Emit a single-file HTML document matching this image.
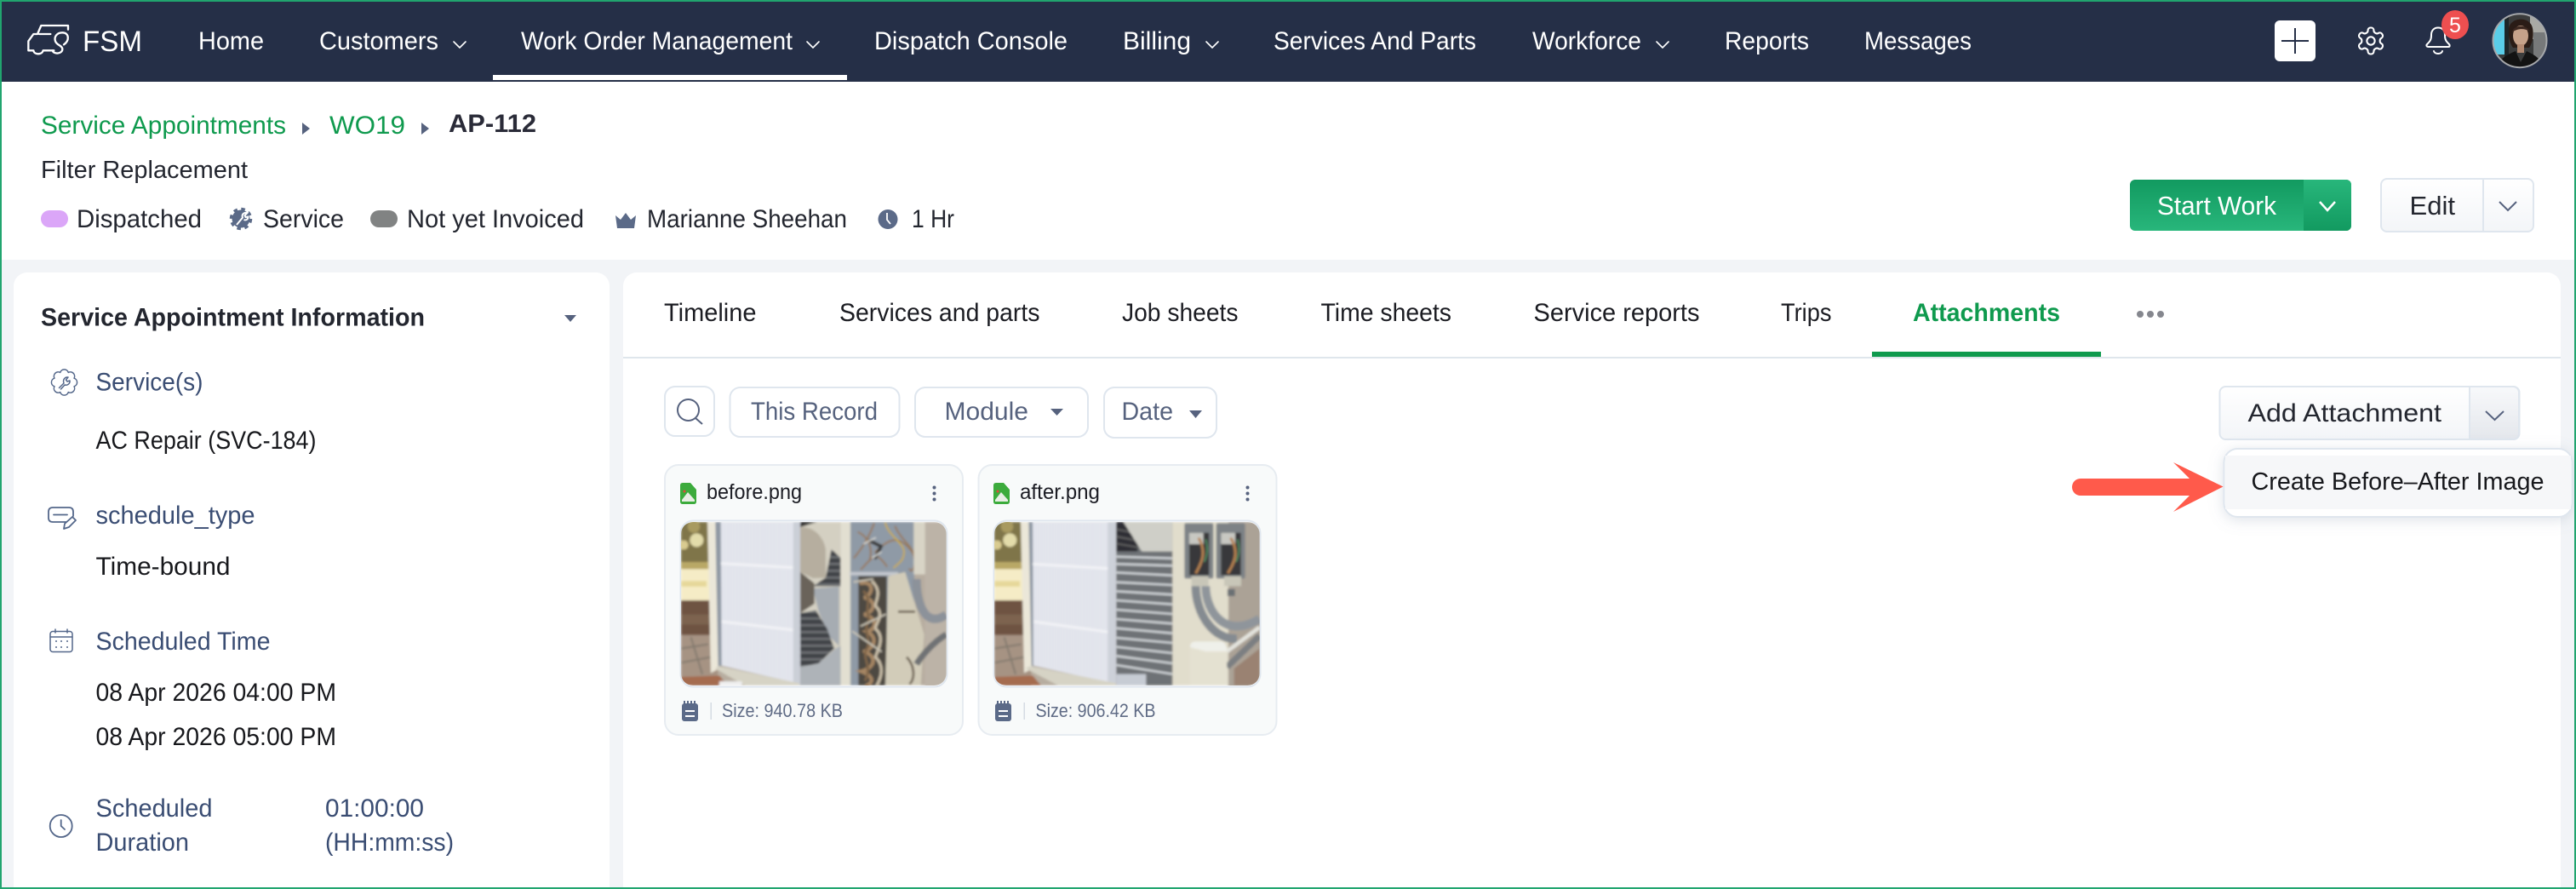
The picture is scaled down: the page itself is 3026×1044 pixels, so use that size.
<!DOCTYPE html>
<html><head><meta charset="utf-8"><title>FSM</title>
<style>
html,body{margin:0;padding:0;background:#fff;width:3026px;height:1044px;overflow:hidden}
svg{display:block}
text{font-family:"Liberation Sans",sans-serif;font-size:30px;fill:#23262f}
.n{fill:#fff}.g{fill:#0f9a4e}.l{fill:#3a4d73}.v{fill:#17181c}.b{font-weight:700}
.t{fill:#1b1c22}.f{fill:#56627e}.s{font-size:22px;fill:#5f6b85}.p{font-size:25px;fill:#1c1d24}
.ic{fill:none;stroke:#54678a;stroke-width:1.8;stroke-linecap:round;stroke-linejoin:round}
.w{fill:none;stroke:#fff;stroke-width:2;stroke-linecap:round;stroke-linejoin:round}
</style></head><body>
<svg width="3026" height="1044" viewBox="0 0 3026 1044" xmlns="http://www.w3.org/2000/svg">
<defs>
<linearGradient id="gm" x1="0" y1="0" x2="0" y2="1"><stop offset="0" stop-color="#129a60"/><stop offset="1" stop-color="#28b67b"/></linearGradient>
<linearGradient id="gs" x1="0" y1="0" x2="0" y2="1"><stop offset="0" stop-color="#28b67b"/><stop offset="1" stop-color="#129a60"/></linearGradient>
<linearGradient id="gw" x1="0" y1="0" x2="0" y2="1"><stop offset="0" stop-color="#fff"/><stop offset="1" stop-color="#f3f5f8"/></linearGradient>
<linearGradient id="gd" x1="0" y1="0" x2="0" y2="1"><stop offset="0" stop-color="#f8f9fb"/><stop offset="1" stop-color="#e4e7ec"/></linearGradient>
<filter id="bl" x="0" y="0" width="1" height="1"><feGaussianBlur stdDeviation="3.6"/></filter>
<filter id="sh" x="-10%" y="-30%" width="120%" height="160%"><feDropShadow dx="0" dy="3" stdDeviation="8" flood-color="#8090a8" flood-opacity=".25"/></filter>
<clipPath id="c1"><rect x="15" y="24" width="935" height="576" rx="42"/></clipPath>
<clipPath id="av"><circle cx="2960" cy="47.7" r="31"/></clipPath>
<pattern id="fl" width="10" height="20" patternUnits="userSpaceOnUse"><rect width="10" height="20" fill="#e6e8ef"/><rect width="3" height="20" fill="#d9dce5"/></pattern>
<pattern id="lv" width="20" height="24" patternUnits="userSpaceOnUse"><rect width="20" height="24" fill="#404246"/><rect y="0" width="20" height="8" fill="#6e7174"/></pattern>
<g id="bgp">
<rect x="15" y="24" width="110" height="165" fill="#7f7448"/>
<circle cx="70" cy="88" r="24" fill="#e3dcaa"/><circle cx="25" cy="105" r="16" fill="#d9cb90"/><circle cx="60" cy="40" r="22" fill="#a89a60"/>
<rect x="15" y="165" width="110" height="30" fill="#b9a866"/>
<rect x="15" y="190" width="110" height="112" fill="#f5ecc6"/><rect x="15" y="232" width="90" height="20" fill="#e6d89a"/>
<rect x="15" y="300" width="110" height="125" fill="#6e5243"/><rect x="15" y="350" width="100" height="35" fill="#7d6450"/>
<rect x="15" y="422" width="130" height="180" fill="#a69383"/>
<path d="M15 470L110 455M15 520L120 500M50 430L90 560" stroke="#837a6e" stroke-width="6" fill="none"/>
<path d="M15 570L150 565L180 600H15Z" fill="#a56c50"/>
<path d="M108 24H142L150 540L120 556Z" fill="#ebe7d9"/>
<path d="M136 24H158L162 530L146 532Z" fill="#8e97a3"/>
</g>
</defs>

<rect width="3026" height="1044" fill="#21a56f"/>
<rect x="2" y="2" width="3022" height="1040" fill="#fff"/>
<rect x="2" y="305" width="3022" height="737" fill="#f2f4f7"/>
<rect x="2" y="2" width="3022" height="94" fill="#252f47"/>

<!-- logo -->
<g transform="translate(20,20) scale(.3333)" fill="none" stroke="#fff" stroke-width="7" stroke-linecap="round" stroke-linejoin="round">
<path d="M180 44V30H85L72 60H58L40 85V118H58M92 118H130M58 118C60 134 88 134 92 118"/>
<path d="M78 60H118"/>
<path d="M165 97C186 84 184 55 160 55C140 55 130 70 135 85C140 100 160 100 160 113C160 130 130 133 125 118"/>
</g>
<text class="n" x="97" y="60" style="font-size:34px" textLength="70" lengthAdjust="spacingAndGlyphs">FSM</text>

<!-- nav -->
<text class="n" x="233" y="58" textLength="77" lengthAdjust="spacingAndGlyphs">Home</text>
<text class="n" x="375" y="58" textLength="140" lengthAdjust="spacingAndGlyphs">Customers</text>
<path class="w" d="M533 49L540 56L547 49" style="stroke-width:1.600"/>
<text class="n" x="612" y="58" textLength="319" lengthAdjust="spacingAndGlyphs">Work Order Management</text>
<path class="w" d="M948 49L955 56L962 49" style="stroke-width:1.600"/>
<rect x="579" y="88" width="416" height="6" fill="#fff"/>
<text class="n" x="1027" y="58" textLength="227" lengthAdjust="spacingAndGlyphs">Dispatch Console</text>
<text class="n" x="1319" y="58" textLength="80" lengthAdjust="spacingAndGlyphs">Billing</text>
<path class="w" d="M1417 49L1424 56L1431 49" style="stroke-width:1.600"/>
<text class="n" x="1496" y="58" textLength="238" lengthAdjust="spacingAndGlyphs">Services And Parts</text>
<text class="n" x="1800" y="58" textLength="128" lengthAdjust="spacingAndGlyphs">Workforce</text>
<path class="w" d="M1946 49L1953 56L1960 49" style="stroke-width:1.600"/>
<text class="n" x="2026" y="58" textLength="99" lengthAdjust="spacingAndGlyphs">Reports</text>
<text class="n" x="2190" y="58" textLength="126" lengthAdjust="spacingAndGlyphs">Messages</text>

<rect x="2672" y="24" width="48" height="48" rx="6" fill="#fff"/>
<path d="M2680 48H2712M2696 33V63" stroke="#252f47" stroke-width="2"/>
<g transform="translate(2766.4,29.4) scale(1.55)" fill="none" stroke="#fff" stroke-width="1.35" stroke-linecap="round" stroke-linejoin="round">
<path d="M12.22 2h-.44a2 2 0 0 0-2 2v.18a2 2 0 0 1-1 1.73l-.43.25a2 2 0 0 1-2 0l-.15-.08a2 2 0 0 0-2.73.73l-.22.38a2 2 0 0 0 .73 2.73l.15.1a2 2 0 0 1 1 1.72v.51a2 2 0 0 1-1 1.74l-.15.09a2 2 0 0 0-.73 2.73l.22.38a2 2 0 0 0 2.73.73l.15-.08a2 2 0 0 1 2 0l.43.25a2 2 0 0 1 1 1.73V20a2 2 0 0 0 2 2h.44a2 2 0 0 0 2-2v-.18a2 2 0 0 1 1-1.73l.43-.25a2 2 0 0 1 2 0l.15.08a2 2 0 0 0 2.73-.73l.22-.39a2 2 0 0 0-.73-2.73l-.15-.08a2 2 0 0 1-1-1.74v-.5a2 2 0 0 1 1-1.74l.15-.09a2 2 0 0 0 .73-2.73l-.22-.38a2 2 0 0 0-2.73-.73l-.15.08a2 2 0 0 1-2 0l-.43-.25a2 2 0 0 1-1-1.73V4a2 2 0 0 0-2-2z"/><circle cx="12" cy="12" r="3"/></g>
<path class="w" d="M2853 55H2876C2878 55 2878 53 2877 52C2874 49 2872 47 2872 42V41C2872 36 2869 32.500 2864 32.500C2859 32.500 2856 36 2856 41V42C2856 47 2854 49 2851 52C2850 53 2850 55 2853 55ZM2859 60C2860 64 2868 64 2869 60"/>
<ellipse cx="2884" cy="29" rx="16" ry="17" fill="#ee4f50"/>
<text x="2884" y="38" text-anchor="middle" style="font-size:25px;fill:#fff">5</text>

<!-- avatar -->
<g clip-path="url(#av)">
<rect x="2928" y="16" width="64" height="64" fill="#3b3c3c"/>
<rect x="2928" y="16" width="15" height="48" fill="#5acde8"/>
<rect x="2942" y="16" width="5" height="64" fill="#1c2629"/>
<rect x="2972" y="16" width="20" height="30" fill="#a9a9a4"/>
<rect x="2976" y="38" width="16" height="42" fill="#77797a"/>
<path d="M2947 34C2948 20 2972 18 2975 33C2977 44 2974 52 2971 56H2952C2949 52 2946 44 2947 34Z" fill="#2a1c16"/>
<ellipse cx="2961" cy="42" rx="9" ry="12" fill="#c6a28a"/>
<path d="M2951 38C2952 29 2968 28 2972 37C2966 33 2957 33 2951 38Z" fill="#3c2820"/>
<path d="M2957 52H2965V62H2957Z" fill="#b38a72"/>
<path d="M2932 80C2936 68 2948 63 2955 60L2961 73L2968 60C2976 64 2985 68 2988 80Z" fill="#131313"/>
</g>
<circle cx="2960" cy="47.700" r="31.500" fill="none" stroke="#a6a8ab" stroke-width="2"/>

<!-- header -->
<text class="g" x="48" y="157" textLength="288" lengthAdjust="spacingAndGlyphs">Service Appointments</text>
<path d="M355 144L364 151L355 158Z" fill="#56627e"/>
<text class="g" x="387" y="157" textLength="89" lengthAdjust="spacingAndGlyphs">WO19</text>
<path d="M495 144L504 151L495 158Z" fill="#56627e"/>
<text class="b" x="527" y="155" textLength="103" lengthAdjust="spacingAndGlyphs" style="fill:#2a2b38">AP-112</text>
<text x="48" y="209" textLength="243" lengthAdjust="spacingAndGlyphs" style="font-size:29px">Filter Replacement</text>

<rect x="48" y="247" width="32" height="20" rx="10" fill="#dba6f8"/>
<text x="90" y="267" textLength="147" lengthAdjust="spacingAndGlyphs">Dispatched</text>
<g fill="#5b6a88"><circle cx="283" cy="257" r="10.500"/>
<circle cx="283" cy="257" r="11.500" fill="none" stroke="#5b6a88" stroke-width="3.500" stroke-dasharray="4.500 4.530"/></g>
<path d="M278 264L285 255.500C283.500 251.500 287 249 290.500 250L287.500 253L288.500 255L291.500 254.500C291.500 258 288.500 259 286.500 258" fill="none" stroke="#fff" stroke-width="2"/>
<text x="309" y="267" textLength="95" lengthAdjust="spacingAndGlyphs">Service</text>
<rect x="435" y="247" width="32" height="20" rx="10" fill="#818383"/>
<text x="478" y="267" textLength="208" lengthAdjust="spacingAndGlyphs">Not yet Invoiced</text>
<path d="M723 253L729 258L735 250L741 258L747 253L745 268H725Z" fill="#5b6a88"/>
<text x="760" y="267" textLength="235" lengthAdjust="spacingAndGlyphs">Marianne Sheehan</text>
<circle cx="1043" cy="257.500" r="11.500" fill="#5b6a88"/>
<path d="M1042 250V258L1046 263" fill="none" stroke="#fff" stroke-width="1.800"/>
<text x="1071" y="267" textLength="50" lengthAdjust="spacingAndGlyphs">1 Hr</text>

<rect x="2502" y="211" width="260" height="60" rx="6" fill="url(#gm)"/>
<path d="M2706 211H2756a6 6 0 0 1 6 6V265a6 6 0 0 1-6 6H2706Z" fill="url(#gs)"/>
<text class="n" x="2534" y="252" textLength="140" lengthAdjust="spacingAndGlyphs" style="font-size:31px">Start Work</text>
<path d="M2725 237L2734 247L2743 237" fill="none" stroke="#fff" stroke-width="2.500"/>

<rect x="2797" y="210" width="179" height="62" rx="7" fill="url(#gw)" stroke="#dfe6ee" stroke-width="2"/>
<path d="M2917 210V272" stroke="#dfe6ee" stroke-width="2"/>
<text x="2830.500" y="252" textLength="53.500" lengthAdjust="spacingAndGlyphs" style="font-size:31px">Edit</text>
<path d="M2936 237L2946 247L2956 237" fill="none" stroke="#56627e" stroke-width="2"/>

<!-- left card -->
<path d="M16 1042V336a16 16 0 0 1 16-16H700a16 16 0 0 1 16 16V1042Z" fill="#fff"/>
<text class="b" x="48" y="382.500" textLength="451" lengthAdjust="spacingAndGlyphs">Service Appointment Information</text>
<path d="M663 370H677L670 378Z" fill="#56627e"/>

<g transform="translate(75.500,449)" class="ic" style="stroke-width:1.500">
<path d="M11.55 -4.78A5 5 0 0 1 11.55 4.78A5 5 0 0 1 4.78 11.55A5 5 0 0 1 -4.78 11.55A5 5 0 0 1 -11.55 4.78A5 5 0 0 1 -11.55 -4.78A5 5 0 0 1 -4.78 -11.55A5 5 0 0 1 4.78 -11.55A5 5 0 0 1 11.55 -4.78Z"/>
<path d="M-6 6.500L-0.500 1C-2 -3 0.500 -6.500 4.500 -6L2 -3L3.500 -1L6.500 -2C7 2 3 4 0.500 3L-4 8"/>
</g>
<text class="l" x="112.500" y="458.500" textLength="126" lengthAdjust="spacingAndGlyphs">Service(s)</text>
<text class="v" x="112.500" y="527" textLength="259" lengthAdjust="spacingAndGlyphs">AC Repair (SVC-184)</text>

<path class="ic" d="M78 613H62Q57 613 57 608V601Q57 596 62 596H81Q86 596 86 601V606M63 604.500H79M75 621L76 615L85 607L89 611L81 619Z"/>
<text class="l" x="112.500" y="615" textLength="187" lengthAdjust="spacingAndGlyphs">schedule_type</text>
<text class="v" x="112.500" y="675" textLength="158" lengthAdjust="spacingAndGlyphs">Time-bound</text>

<rect class="ic" x="59" y="741.500" width="26" height="24" rx="3" style="stroke-width:1.500"/>
<path class="ic" d="M59 748H85M65 739V743M79 739V743" style="stroke-width:1.500"/>
<path d="M65 753h2M71 753h2M78 753h2M65 760h2M71 760h2M78 760h2" stroke="#54678a" stroke-width="1.500"/>
<text class="l" x="112.500" y="763" textLength="205" lengthAdjust="spacingAndGlyphs">Scheduled Time</text>
<text class="v" x="112.500" y="823" textLength="282.500" lengthAdjust="spacingAndGlyphs">08 Apr 2026 04:00 PM</text>
<text class="v" x="112.500" y="875" textLength="282.500" lengthAdjust="spacingAndGlyphs">08 Apr 2026 05:00 PM</text>

<circle class="ic" cx="71.700" cy="970" r="13"/>
<path class="ic" d="M71.700 963V970L76 974"/>
<text class="l" x="112.500" y="959" textLength="137" lengthAdjust="spacingAndGlyphs">Scheduled</text>
<text class="l" x="112.500" y="999" textLength="109.500" lengthAdjust="spacingAndGlyphs">Duration</text>
<text class="l" x="382" y="959" textLength="116" lengthAdjust="spacingAndGlyphs">01:00:00</text>
<text class="l" x="382" y="999" textLength="151" lengthAdjust="spacingAndGlyphs">(HH:mm:ss)</text>

<!-- right card -->
<path d="M732 1042V336a16 16 0 0 1 16-16H2992a16 16 0 0 1 16 16V1042Z" fill="#fff"/>
<rect x="732" y="419" width="2276" height="2" fill="#dfe6ec"/>
<text class="t" x="780" y="377" textLength="108.500" lengthAdjust="spacingAndGlyphs">Timeline</text>
<text class="t" x="986" y="377" textLength="235.500" lengthAdjust="spacingAndGlyphs">Services and parts</text>
<text class="t" x="1318" y="377" textLength="136.500" lengthAdjust="spacingAndGlyphs">Job sheets</text>
<text class="t" x="1551.500" y="377" textLength="153.500" lengthAdjust="spacingAndGlyphs">Time sheets</text>
<text class="t" x="1801.500" y="377" textLength="195" lengthAdjust="spacingAndGlyphs">Service reports</text>
<text class="t" x="2092" y="377" textLength="59.500" lengthAdjust="spacingAndGlyphs">Trips</text>
<text class="g b" x="2247" y="377" textLength="173" lengthAdjust="spacingAndGlyphs">Attachments</text>
<rect x="2199" y="413" width="269" height="6" fill="#0f9a4e"/>
<circle cx="2514" cy="369" r="4" fill="#85878e"/><circle cx="2526" cy="369" r="4" fill="#85878e"/><circle cx="2538" cy="369" r="4" fill="#85878e"/>

<!-- filters -->
<rect x="781" y="454" width="58" height="58" rx="12" fill="#fff" stroke="#dfe6ee" stroke-width="2"/>
<circle cx="808.500" cy="481.500" r="12.500" fill="none" stroke="#56627e" stroke-width="2"/>
<path d="M817 491L825 498" stroke="#56627e" stroke-width="2"/>
<rect x="857.500" y="455" width="199" height="58" rx="12" fill="#fff" stroke="#dfe6ee" stroke-width="2"/>
<text class="f" x="882" y="493" textLength="149" lengthAdjust="spacingAndGlyphs">This Record</text>
<rect x="1075" y="455" width="203" height="58" rx="12" fill="#fff" stroke="#dfe6ee" stroke-width="2"/>
<text class="f" x="1109.500" y="493" textLength="98.500" lengthAdjust="spacingAndGlyphs">Module</text>
<path d="M1234 480H1249L1241.500 488Z" fill="#56627e"/>
<rect x="1297" y="455" width="132" height="59" rx="12" fill="#fff" stroke="#dfe6ee" stroke-width="2"/>
<text class="f" x="1317.500" y="493" textLength="60.500" lengthAdjust="spacingAndGlyphs">Date</text>
<path d="M1397 482H1412L1404.500 491Z" fill="#56627e"/>

<!-- cards -->
<rect x="781" y="546" width="350" height="317" rx="16" fill="#f8fafa" stroke="#e7ecf1" stroke-width="2"/>
<rect x="1149.500" y="546" width="350" height="317" rx="16" fill="#f8fafa" stroke="#e7ecf1" stroke-width="2"/>

<path d="M802 567H811L818 575V589Q818 592 815 592H802Q799 592 799 589V570Q799 567 802 567Z" fill="#3cab3c"/>
<path d="M801 587L808 578L816 587V589H801Z" fill="#e8eee4"/><circle cx="804" cy="577" r="1.500" fill="#e04a3a"/>
<text class="p" x="830" y="586" textLength="112" lengthAdjust="spacingAndGlyphs">before.png</text>
<circle cx="1097.500" cy="572.500" r="2" fill="#56627e"/><circle cx="1097.500" cy="579.500" r="2" fill="#56627e"/><circle cx="1097.500" cy="586.500" r="2" fill="#56627e"/>

<path d="M1170 567H1179L1186 575V589Q1186 592 1183 592H1170Q1167 592 1167 589V570Q1167 567 1170 567Z" fill="#3cab3c"/>
<path d="M1169 587L1176 578L1184 587V589H1169Z" fill="#e8eee4"/><circle cx="1172" cy="577" r="1.500" fill="#e04a3a"/>
<text class="p" x="1198" y="586" textLength="94" lengthAdjust="spacingAndGlyphs">after.png</text>
<circle cx="1465.500" cy="572.500" r="2" fill="#56627e"/><circle cx="1465.500" cy="579.500" r="2" fill="#56627e"/><circle cx="1465.500" cy="586.500" r="2" fill="#56627e"/>

<!-- image 1 -->
<rect x="799.500" y="611.500" width="313" height="195" rx="15" fill="#fff" stroke="#dfe6ee" stroke-width="2"/>
<g transform="translate(795,605) scale(.3333)">
<g clip-path="url(#c1)"><g filter="url(#bl)">
<rect x="15" y="24" width="935" height="576" fill="#b7ada0"/>
<use href="#bgp"/>
<path d="M155 24H415V590L158 530Z" fill="url(#fl)"/>
<path d="M155 170L415 185M158 375L415 405" stroke="#f2f3f6" stroke-width="9" fill="none"/>
<path d="M410 24H436V600H410Z" fill="#cbcfd7"/>
<path d="M135 540L146 532L432 592V600H240Z" fill="#d6d3c5"/>
<path d="M150 585H230V600H150Z" fill="#eee"/>
<rect x="435" y="24" width="145" height="576" fill="#d4d0c2"/>
<path d="M435 24H495L435 42Z" fill="#2a2a2a"/>
<path d="M435 42C480 40 515 70 525 120L525 220L480 222L435 200Z" fill="#b6ae9f"/>
<path d="M525 220L545 120L577 150V250H480Z" fill="url(#lv)"/>
<path d="M480 258L572 252V460L540 430L500 340Z" fill="#a6acb2"/>
<path d="M435 200L485 240V312L435 345Z" fill="#6a635a"/>
<path d="M435 345L490 335L530 400L555 470L500 522L435 535Z" fill="url(#lv)"/>
<path d="M435 535L500 522L560 470L577 460V600H435Z" fill="#aeb3b8"/>
<rect x="578" y="24" width="34" height="576" fill="#e2dfd1"/>
<rect x="612" y="24" width="225" height="576" fill="#8f9aa6"/>
<rect x="640" y="215" width="100" height="385" fill="#4e4a42"/>
<g fill="none" stroke-linecap="round">
<path d="M650 240C695 230 695 280 660 290C705 300 700 340 660 350C705 360 710 400 670 410C712 430 695 470 660 480C712 500 695 540 650 550C700 570 690 590 670 600" stroke="#a58563" stroke-width="13" stroke-dasharray="16 5"/>
<path d="M690 235C725 270 700 300 700 320C735 350 700 380 700 400C735 430 710 470 700 500C732 530 722 570 705 600" stroke="#c9bea8" stroke-width="10" stroke-dasharray="14 6"/>
<path d="M660 270C690 300 660 330 680 370C650 400 690 440 670 470C650 500 690 530 665 580" stroke="#7f6548" stroke-width="9" stroke-dasharray="10 6"/>
<path d="M625 235L690 225M620 410L720 480M650 390L735 350" stroke="#c9c4b6" stroke-width="6"/>
<path d="M625 150C660 110 680 70 695 30M650 190C690 150 700 120 740 180M700 130C740 90 780 60 830 130C850 170 830 210 820 190M640 60C680 80 690 120 680 160M770 40C790 90 840 110 845 170" stroke="#97795c" stroke-width="6"/>
<path d="M735 28C750 80 810 100 800 140C795 165 780 170 765 185" stroke="#cfae3c" stroke-width="5"/>
<path d="M680 90L720 110L700 150" stroke="#3a3a3a" stroke-width="12"/>
<path d="M660 100L700 80M690 150L720 130" stroke="#d8d8d4" stroke-width="5"/>
</g>
<rect x="610" y="200" width="170" height="12" fill="#c4c8ce"/>
<path d="M745 215L805 200L872 420L860 600H735Z" fill="#d2ccb9"/>
<rect x="835" y="24" width="42" height="185" fill="#d8d4c6"/>
<rect x="875" y="24" width="80" height="580" fill="#bcb3a7"/>
<path d="M845 225C845 320 880 400 950 350" fill="none" stroke="#8c929a" stroke-width="30"/>
<path d="M950 420C900 450 860 500 845 525" fill="none" stroke="#6f7274" stroke-width="22"/>
<path d="M780 340H840M810 500C840 530 840 580 820 595" fill="none" stroke="#6a5f50" stroke-width="8"/>
</g></g></g>

<!-- image 2 -->
<rect x="1167.500" y="611.500" width="313" height="195" rx="15" fill="#fff" stroke="#dfe6ee" stroke-width="2"/>
<g transform="translate(1163,605) scale(.3333)">
<g clip-path="url(#c1)"><g filter="url(#bl)">
<rect x="15" y="24" width="935" height="576" fill="#b7ada0"/>
<use href="#bgp"/>
<path d="M150 24H420V590L153 530Z" fill="url(#fl)"/>
<path d="M150 172L420 188M153 375L420 412" stroke="#f2f3f6" stroke-width="9" fill="none"/>
<path d="M415 24H445V600H415Z" fill="#cdd1d9"/>
<path d="M125 540L140 532L445 592V600H240Z" fill="#d6d3c5"/>
<rect x="445" y="24" width="198" height="576" fill="#6e7276"/>
<path d="M445 24H520V128H445Z" fill="#2e2f34"/>
<path d="M445 50L500 60M445 75L520 90M445 100L530 115" stroke="#666" stroke-width="5"/>
<path d="M470 24H643V128H535Z" fill="#cfcfc8"/>
<g stroke="#d4d8db" stroke-width="7"><path d="M445 146L643 152M445 172L643 178M445 202L643 212M445 236L643 246M445 268L643 280M445 300L643 314M445 333L643 348M445 366L643 382M445 398L643 416M445 432L643 450M445 464L643 486M445 496L643 522M445 528L643 560"/></g>
<path d="M445 560H550V600H445Z" fill="#c7ccd4"/>
<rect x="643" y="24" width="200" height="576" fill="#e1ddcc"/>
<rect x="840" y="24" width="115" height="580" fill="#aba296"/>
<rect x="685" y="28" width="102" height="195" rx="6" fill="#7d8286"/>
<rect x="797" y="28" width="102" height="195" rx="6" fill="#7d8286"/>
<rect x="702" y="62" width="70" height="150" fill="#37383a"/>
<rect x="814" y="62" width="70" height="150" fill="#37383a"/>
<rect x="702" y="62" width="50" height="40" fill="#c8c8c2"/>
<rect x="814" y="62" width="50" height="40" fill="#c8c8c2"/>
<path d="M725 205C745 170 765 130 735 80M838 205C860 170 880 130 848 80" stroke="#b5814f" stroke-width="9" fill="none"/>
<path d="M760 85C770 120 765 140 755 165M872 85C882 120 877 140 867 165" stroke="#5fb87a" stroke-width="3" fill="none"/>
<rect x="710" y="215" width="60" height="35" fill="#c8c6b8"/>
<rect x="825" y="215" width="60" height="35" fill="#c8c6b8"/>
<path d="M725 250C725 350 790 440 870 435" fill="none" stroke="#858b91" stroke-width="30"/>
<path d="M760 250C760 340 830 440 950 365" fill="none" stroke="#8f959b" stroke-width="30"/>
<path d="M850 260V285" stroke="#6a6f73" stroke-width="26"/>
<path d="M835 480L950 395" stroke="#e4e4de" stroke-width="14"/>
<path d="M835 535L950 425" stroke="#7b7f82" stroke-width="22"/>
<path d="M860 540L950 470V600H860Z" fill="#9a8272"/>
<path d="M705 465Q705 445 725 445H815Q835 450 835 480V600H705Z" fill="#e4e1d1"/>
<path d="M705 465Q705 445 725 445H815Q835 450 835 480L760 480Z" fill="#eff0ea"/>
</g></g></g>

<!-- size rows -->
<rect x="801" y="826" width="19" height="21" rx="3" fill="#5b6a88"/>
<path d="M804 823V829M808 823V829M812 823V829M816 823V829" stroke="#5b6a88" stroke-width="2"/>
<path d="M805 835H816M805 841H816" stroke="#fff" stroke-width="2"/>
<rect x="834.500" y="825" width="1.500" height="20" fill="#d5dbe3"/>
<text class="s" x="848" y="842" textLength="142" lengthAdjust="spacingAndGlyphs">Size: 940.78 KB</text>
<rect x="1169" y="826" width="19" height="21" rx="3" fill="#5b6a88"/>
<path d="M1172 823V829M1176 823V829M1180 823V829M1184 823V829" stroke="#5b6a88" stroke-width="2"/>
<path d="M1173 835H1184M1173 841H1184" stroke="#fff" stroke-width="2"/>
<rect x="1202.500" y="825" width="1.500" height="20" fill="#d5dbe3"/>
<text class="s" x="1216.500" y="842" textLength="141" lengthAdjust="spacingAndGlyphs">Size: 906.42 KB</text>

<!-- add attachment -->
<rect x="2607.500" y="454" width="352" height="62" rx="7" fill="url(#gw)" stroke="#dfe6ee" stroke-width="2"/>
<path d="M2901 454H2952a7 7 0 0 1 7 7V509a7 7 0 0 1-7 7H2901Z" fill="url(#gd)" stroke="#dfe6ee" stroke-width="2"/>
<text x="2640.500" y="495" textLength="227.500" lengthAdjust="spacingAndGlyphs">Add Attachment</text>
<path d="M2920 483L2930.500 493L2941 483" fill="none" stroke="#56627e" stroke-width="2"/>

<!-- dropdown -->
<rect x="2612.500" y="527" width="409" height="80" rx="16" fill="#fff" stroke="#dfe6ee" stroke-width="2" filter="url(#sh)"/>
<rect x="2614" y="535" width="406" height="63" fill="#f6f7f9"/>
<text class="v" x="2644.500" y="575" textLength="344" lengthAdjust="spacingAndGlyphs" style="font-size:29px">Create Before–After Image</text>

<!-- arrow -->
<path d="M2444 562H2572L2553 543L2611.500 571.500L2553 601L2572 582H2444A10 10 0 0 1 2444 562Z" fill="#ff5a4b"/>
</svg>
</body></html>
